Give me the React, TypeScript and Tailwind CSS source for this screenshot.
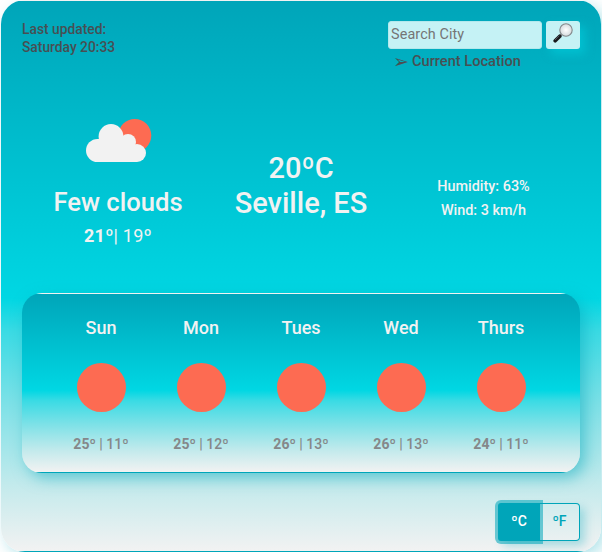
const surface =
  'border border-transparent bg-[linear-gradient(180deg,#00a5b9_0%,#00d7e3_54%,#3adbe4_60%,#7ce1e7_73%,#c3eaec_88%,#f2f2f2_100%)]';

const days = [
  { name: 'Sun', high: 25, low: 11 },
  { name: 'Mon', high: 25, low: 12 },
  { name: 'Tues', high: 26, low: 13 },
  { name: 'Wed', high: 26, low: 13 },
  { name: 'Thurs', high: 24, low: 11 },
];

function FewClouds() {
  return (
    <svg width="66" height="44" viewBox="0 0 66 44" className="ml-px block">
      <circle cx="48.800" cy="16.500" r="16.500" fill="#fd6b52" />
      <g fill="#f2f2f2">
        <circle cx="11.500" cy="31.500" r="11.500" />
        <circle cx="25" cy="17.400" r="12.400" />
        <circle cx="42" cy="23" r="8" />
        <circle cx="51" cy="34" r="9" />
        <path d="M11 20h31l9 14v9H11Z" />
      </g>
    </svg>
  );
}

function MagnifierIcon() {
  return (
    <svg width="20" height="20" viewBox="0 0 20 20" className="block">
      <defs>
        <radialGradient id="lens">
          <stop offset="0" stopColor="#ffffff" />
          <stop offset="1" stopColor="#d5dadd" />
        </radialGradient>
      </defs>
      <path d="M8.500 11.500 6.500 13.500" stroke="#888" strokeWidth="2" />
      <path d="M6.800 13.200 2.200 17.800" stroke="#17191b" strokeWidth="3.600" strokeLinecap="round" />
      <path d="M6.300 12.800 2 17" stroke="#667" strokeWidth="0.800" />
      <circle cx="13" cy="7" r="6.200" fill="url(#lens)" stroke="#85888b" strokeWidth="1.100" />
    </svg>
  );
}

export default function App() {
  return (
    <div className="h-[552px] w-[602px] overflow-hidden bg-white pl-px font-['Roboto','Liberation_Sans',sans-serif] font-medium">
      <main className={`flex h-[552px] w-[600px] flex-col rounded-[24px] px-5 shadow-[5px_5px_15px_rgba(0,165,185,0.3)] ${surface}`}>
        <header className="flex h-[100px] justify-between pt-5">
          <div className="-mt-px text-[13.800px] leading-[18px] text-[#484f53]">
            Last updated:
            <br />
            Saturday 20:33
          </div>
          <div className="w-[192px]">
            <div className="flex gap-1">
              <input
                placeholder="Search City"
                className="h-7 w-[154px] rounded-[3px] border border-[#b3e9ed] bg-[#c5f2f5] px-[2px] pb-[2px] text-[14.400px] font-normal tracking-[0.100px] placeholder:text-[#757575]"
              />
              <button aria-label="Search" className="flex h-7 w-[34px] items-center justify-center rounded-[3px] bg-[#c5f2f5] pb-1 shadow-[5px_5px_10px_rgba(0,214,227,0.5)]">
                <MagnifierIcon />
              </button>
            </div>
            <div className="flex items-center gap-[3px] pt-px pl-[5px] text-[14.600px] leading-[20px] text-[#484f53]">
              <span className="w-4 font-['DejaVu_Sans',sans-serif] text-[19px] font-normal">➢</span>
              <span className="pt-px">Current Location</span>
            </div>
          </div>
        </header>

        <section className="flex h-[192px] text-center text-[#f2f2f2]">
          <div className="flex w-[192px] flex-col items-center pt-[18px]">
            <FewClouds />
            <div className="mt-[23px] text-[25.600px] leading-[32px]">Few clouds</div>
            <div className="mt-[6px] text-[18px] leading-[24px] font-normal tracking-[0.200px]">
              <strong>21º</strong>| 19º
            </div>
          </div>
          <div className="w-[174px] pt-[50px] text-[29px] leading-[35px]">
            20ºC
            <br />
            Seville, ES
          </div>
          <div className="w-[191px] pt-[74px] text-[14.400px] leading-[24px]">
            Humidity: 63%
            <br />
            Wind: 3 km/h
          </div>
        </section>

        <section className={`flex h-[180px] shrink-0 justify-center rounded-[20px] shadow-[5px_5px_15px_rgba(0,165,185,0.5)] ${surface}`}>
          {days.map((day) => (
            <div key={day.name} className="flex w-[100px] flex-col items-center">
              <div className="mt-[22px] text-[18px] leading-[24px] text-[#f2f2f2]">{day.name}</div>
              <div className="mt-[23px] ml-px size-[49px] rounded-full bg-[#fd6b52]" />
              <div className="mt-[22px] text-[14px] leading-[20px] text-[#858789]">
                <strong>{day.high}º</strong> | {day.low}º
              </div>
            </div>
          ))}
        </section>

        <footer className="flex justify-end pt-[30px]">
          <div className="flex h-[38px] w-[82px] rounded-[4px] text-[14px] shadow-[5px_5px_10px_rgba(0,165,185,0.3)]">
            <button className="w-[42px] rounded-l-[3px] bg-[#00a5b9] pb-[2px] text-white shadow-[0_0_0_3px_rgba(0,165,185,0.55)]">ºC</button>
            <button className="w-10 rounded-r-[4px] border border-l-0 border-[#00a5b9] pb-[2px] text-[#00a5b9]">ºF</button>
          </div>
        </footer>
      </main>
    </div>
  );
}
